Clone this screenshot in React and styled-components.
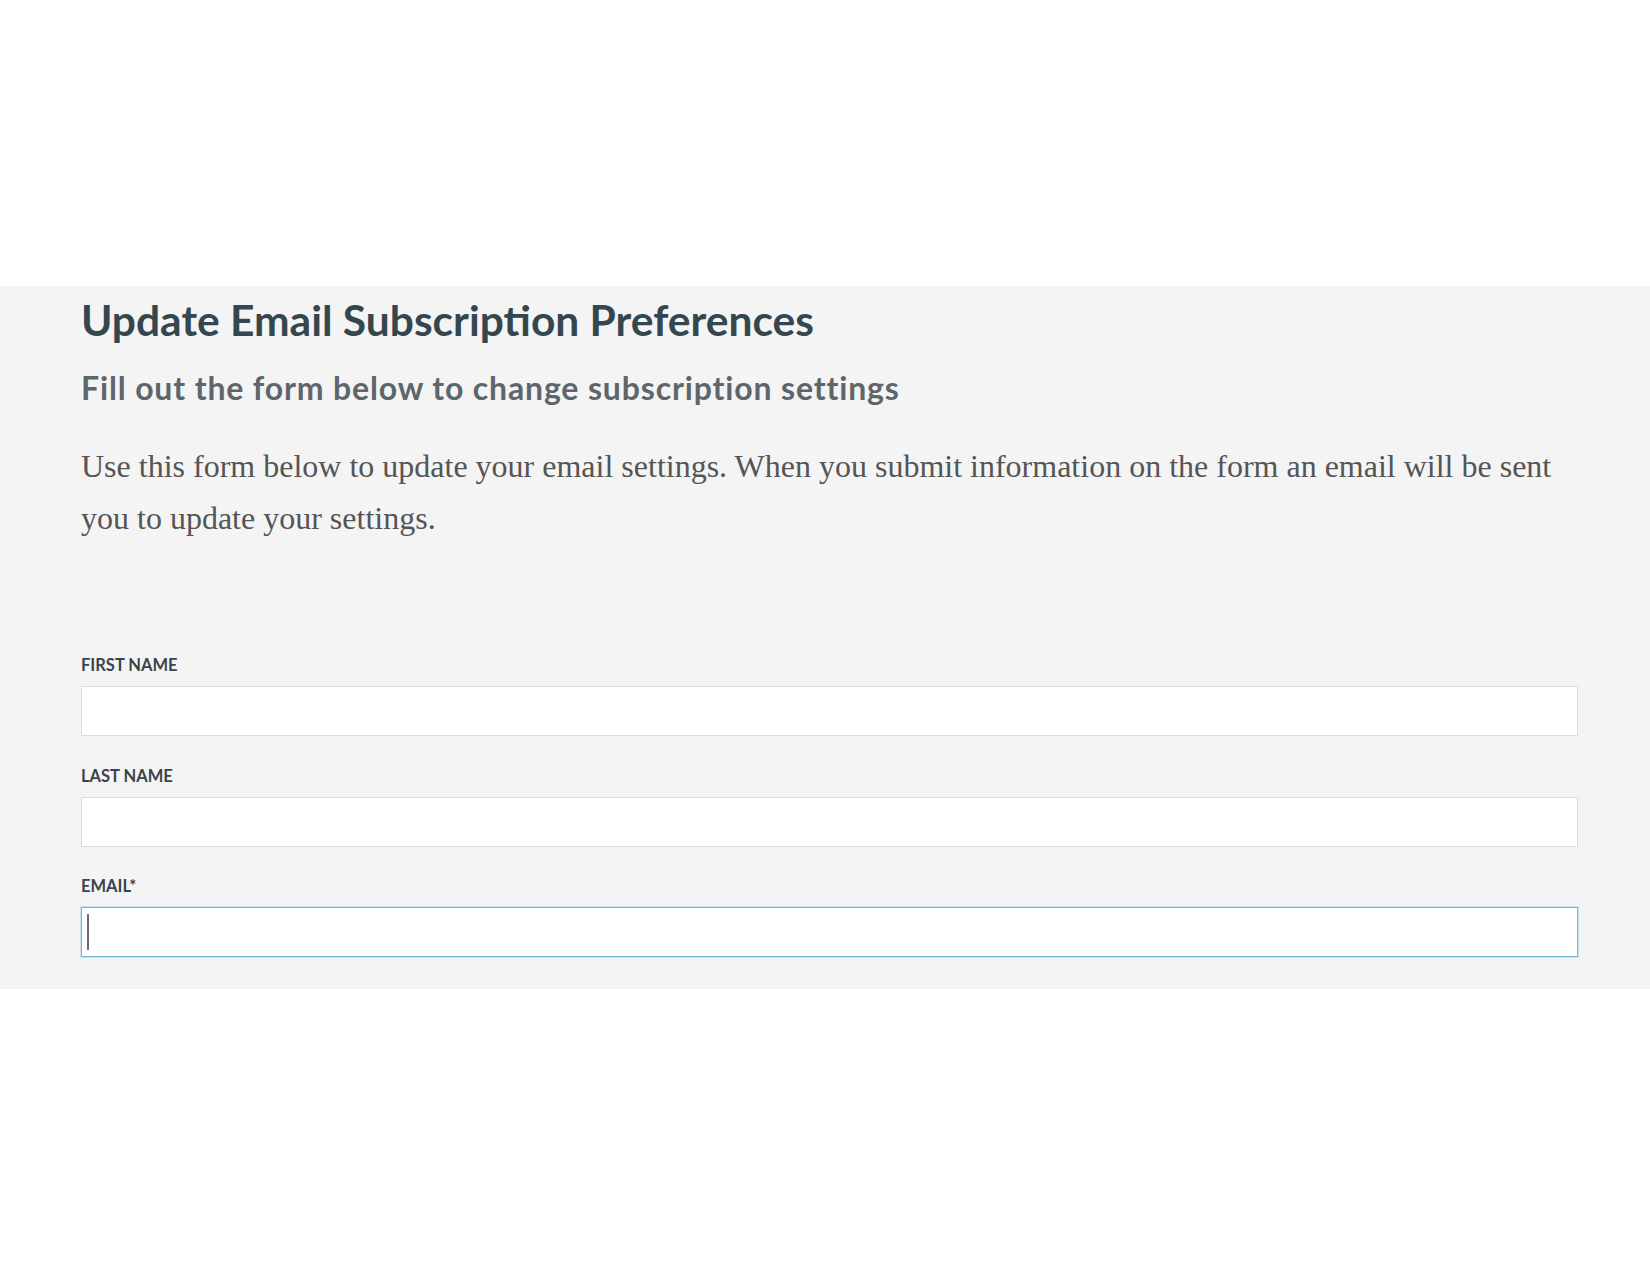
import React from "react";
import styled, { createGlobalStyle } from "styled-components";

const Global = createGlobalStyle`
  html, body { margin: 0; padding: 0; background: #ffffff; }
  body { font-family: "Lato", "Liberation Sans", sans-serif; }
  * { box-sizing: border-box; }
`;

const Page = styled.div`
  padding-top: 286px;
  min-height: 1275px;
  background: #ffffff;
`;

const Section = styled.section`
  background: #f4f4f4;
  padding: 8px 72px 32px 81px;
  display: flex;
  flex-direction: column;
`;

const Title = styled.h1`
  margin: 0;
  font-family: "Lato", sans-serif;
  font-weight: 700;
  font-size: 42.5px;
  line-height: 1.2;
  color: #34474f;
`;

const Subtitle = styled.h2`
  margin: 24px 0 0;
  font-family: "Lato", sans-serif;
  font-weight: 700;
  font-size: 32px;
  line-height: 1.2;
  letter-spacing: 0.85px;
  color: #5e666b;
`;

const Intro = styled.p`
  margin: 33px 0 0;
  font-family: "Liberation Serif", serif;
  font-size: 32px;
  line-height: 52px;
  color: #555555;
`;

const Form = styled.form`
  margin-top: 111px;
  display: flex;
  flex-direction: column;
  gap: 29.5px;
`;

const Field = styled.div`
  display: flex;
  flex-direction: column;
  gap: 11px;
`;

const Label = styled.label`
  font-family: "Lato", sans-serif;
  font-weight: 700;
  font-size: 16.5px;
  line-height: 20px;
  text-transform: uppercase;
  color: #3a444a;
`;

const InputWrap = styled.div`
  position: relative;
`;

const Input = styled.input`
  display: block;
  width: 100%;
  height: 50px;
  margin: 0;
  padding: 0 10px;
  background: #ffffff;
  border: 1px solid ${(p) => (p.$focused ? "#6dbbd9" : "#dcdcdc")};
  box-shadow: ${(p) =>
    p.$focused ? "0 0 0 1px rgba(120, 195, 225, 0.35)" : "none"};
  border-radius: 0;
  outline: none;
  font-family: "Lato", sans-serif;
  font-size: 18px;
  color: #333;
  caret-color: transparent;
`;

const Caret = styled.span`
  position: absolute;
  left: 6px;
  top: 7px;
  width: 2px;
  height: 36px;
  background: #6a6a6a;
`;

const fields = [
  { id: "first", label: "First Name" },
  { id: "last", label: "Last Name" },
  { id: "email", label: "Email*", focused: true },
];

export default function App() {
  return (
    <>
      <Global />
      <Page>
        <Section>
          <Title>Update Email Subscription Preferences</Title>
          <Subtitle>Fill out the form below to change subscription settings</Subtitle>
          <Intro>
            Use this form below to update your email settings. When you submit
            information on the form an email will be sent you to update your
            settings.
          </Intro>
          <Form onSubmit={(e) => e.preventDefault()}>
            {fields.map((f) => (
              <Field key={f.id}>
                <Label htmlFor={f.id}>{f.label}</Label>
                <InputWrap>
                  <Input id={f.id} type="text" $focused={f.focused} />
                  {f.focused && <Caret />}
                </InputWrap>
              </Field>
            ))}
          </Form>
        </Section>
      </Page>
    </>
  );
}
